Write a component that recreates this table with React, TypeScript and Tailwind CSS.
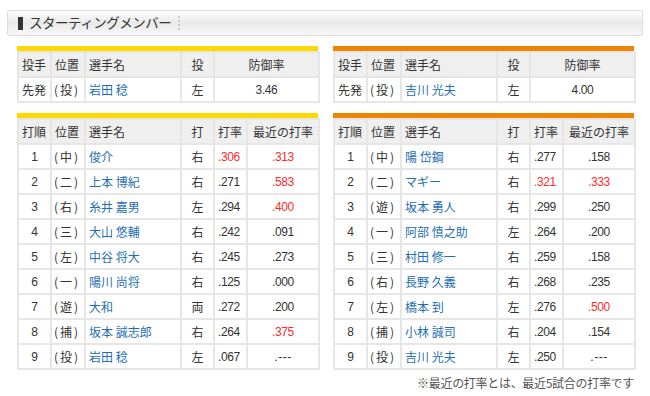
import React from 'react'

type Batter = {
  order: string
  pos: string
  name: string
  hand: string
  avg: string
  recent: string
  avgRed?: boolean
  recentRed?: boolean
}

const pitchers = {
  left: { role: '先発', pos: '投', name: '岩田 稔', hand: '左', era: '3.46' },
  right: { role: '先発', pos: '投', name: '吉川 光夫', hand: '左', era: '4.00' },
}

const tigers: Batter[] = [
  { order: '1', pos: '中', name: '俊介', hand: '右', avg: '.306', recent: '.313', avgRed: true, recentRed: true },
  { order: '2', pos: '二', name: '上本 博紀', hand: '右', avg: '.271', recent: '.583', recentRed: true },
  { order: '3', pos: '右', name: '糸井 嘉男', hand: '左', avg: '.294', recent: '.400', recentRed: true },
  { order: '4', pos: '三', name: '大山 悠輔', hand: '右', avg: '.242', recent: '.091' },
  { order: '5', pos: '左', name: '中谷 将大', hand: '右', avg: '.245', recent: '.273' },
  { order: '6', pos: '一', name: '陽川 尚将', hand: '右', avg: '.125', recent: '.000' },
  { order: '7', pos: '遊', name: '大和', hand: '両', avg: '.272', recent: '.200' },
  { order: '8', pos: '捕', name: '坂本 誠志郎', hand: '右', avg: '.264', recent: '.375', recentRed: true },
  { order: '9', pos: '投', name: '岩田 稔', hand: '左', avg: '.067', recent: '.---' },
]

const fighters: Batter[] = [
  { order: '1', pos: '中', name: '陽 岱鋼', hand: '右', avg: '.277', recent: '.158' },
  { order: '2', pos: '二', name: 'マギー', hand: '右', avg: '.321', recent: '.333', avgRed: true, recentRed: true },
  { order: '3', pos: '遊', name: '坂本 勇人', hand: '右', avg: '.299', recent: '.250' },
  { order: '4', pos: '一', name: '阿部 慎之助', hand: '左', avg: '.264', recent: '.200' },
  { order: '5', pos: '三', name: '村田 修一', hand: '右', avg: '.259', recent: '.158' },
  { order: '6', pos: '右', name: '長野 久義', hand: '右', avg: '.268', recent: '.235' },
  { order: '7', pos: '左', name: '橋本 到', hand: '左', avg: '.276', recent: '.500', recentRed: true },
  { order: '8', pos: '捕', name: '小林 誠司', hand: '右', avg: '.204', recent: '.154' },
  { order: '9', pos: '投', name: '吉川 光夫', hand: '左', avg: '.250', recent: '.---' },
]

const cell = 'h-[25px] p-0 px-[3px] border-2 border-[#e6e6e6] text-[12px] leading-[16px] whitespace-nowrap overflow-hidden'
const th = `${cell} bg-[#efefef] font-normal text-[#333]`
const td = `${cell} bg-white`
const dark = 'text-[#333]'
const blue = 'text-[#1f6fb2]'
const red = 'text-[#ff2a2a]'
const num = "font-['Liberation_Sans','Noto_Sans_CJK_JP',sans-serif] text-[11.5px] tracking-[-0.4px]"

// position like （中） squeezed into the narrow column
const Pos = ({ p }: { p: string }) => (
  <span className="inline-flex items-center">
    <span>(</span>
    <span className="mx-[2px]">{p}</span>
    <span>)</span>
  </span>
)

const Recent = ({ v }: { v: string }) =>
  v === '.---' ? <span className="tracking-[0.5px]">.‐‐‐</span> : <>{v}</>

const Cols = ({ last }: { last: number[] }) => (
  <colgroup>
    <col className="w-[33px]" />
    <col className="w-[34px]" />
    <col className="w-[96px]" />
    <col className="w-[33px]" />
    {last.map((w, i) => (
      <col key={i} style={{ width: w }} />
    ))}
  </colgroup>
)

const PitcherTable = ({ p, bar }: { p: typeof pitchers.left; bar: string }) => (
  <div className="w-[301px]">
    <div className={`h-[5px] ${bar}`} />
    <table className="w-full table-fixed border-collapse">
      <Cols last={[105]} />
      <thead>
        <tr>
          <th className={`${th} text-left`}>投手</th>
          <th className={`${th} text-left`}>位置</th>
          <th className={`${th} text-left`}>選手名</th>
          <th className={`${th} text-center`}>投</th>
          <th className={`${th} text-center`}>防御率</th>
        </tr>
      </thead>
      <tbody>
        <tr>
          <td className={`${td} ${dark}`}>{p.role}</td>
          <td className={`${td} ${dark} pl-[2px] pr-0`}><Pos p={p.pos} /></td>
          <td className={`${td} ${blue}`}>{p.name}</td>
          <td className={`${td} ${dark} text-center`}>{p.hand}</td>
          <td className={`${td} ${dark} text-center ${num}`}>{p.era}</td>
        </tr>
      </tbody>
    </table>
  </div>
)

const BatterTable = ({ rows, bar }: { rows: Batter[]; bar: string }) => (
  <div className="w-[301px]">
    <div className={`h-[5px] ${bar}`} />
    <table className="w-full table-fixed border-collapse">
      <Cols last={[33, 72]} />
      <thead>
        <tr>
          <th className={`${th} text-left`}>打順</th>
          <th className={`${th} text-left`}>位置</th>
          <th className={`${th} text-left`}>選手名</th>
          <th className={`${th} text-center`}>打</th>
          <th className={`${th} text-left`}>打率</th>
          <th className={`${th} text-center`}>最近の打率</th>
        </tr>
      </thead>
      <tbody>
        {rows.map((r) => (
          <tr key={r.order}>
            <td className={`${td} ${dark} text-center ${num}`}>{r.order}</td>
            <td className={`${td} ${dark} pl-[2px] pr-0`}><Pos p={r.pos} /></td>
            <td className={`${td} ${blue}`}>{r.name}</td>
            <td className={`${td} ${dark} text-center`}>{r.hand}</td>
            <td className={`${td} ${num} ${r.avgRed ? red : dark}`}>{r.avg}</td>
            <td className={`${td} text-center ${num} ${r.recentRed ? red : dark}`}><Recent v={r.recent} /></td>
          </tr>
        ))}
      </tbody>
    </table>
  </div>
)

export default function App() {
  return (
    <div className="w-[650px] h-[396px] overflow-hidden bg-white font-['Noto_Sans_CJK_JP',sans-serif] text-[#333] pt-[10px]">
      {/* title bar */}
      <div className="mx-[7px] h-[26px] rounded-[2px] border border-[#dedede] bg-gradient-to-b from-[#fdfdfd] via-[#e9e9e9] to-[#f7f7f7] flex items-center pl-[10px]">
        <span className="w-[5px] h-[13px] bg-[#333]" />
        <span className="ml-[6px] text-[13.5px] leading-none tracking-[-0.5px] text-[#333]">スターティングメンバー</span>
        <span className="ml-[7px] h-[14px] border-l-2 border-dotted border-[#ccc]" />
      </div>

      <div className="flex gap-[15px] pl-[17px] mt-[10px]">
        <PitcherTable p={pitchers.left} bar="bg-[#ffd800]" />
        <PitcherTable p={pitchers.right} bar="bg-[#f08300]" />
      </div>

      <div className="flex gap-[15px] pl-[17px] mt-[10px]">
        <BatterTable rows={tigers} bar="bg-[#ffd800]" />
        <BatterTable rows={fighters} bar="bg-[#f08300]" />
      </div>

      <div className="w-[634px] text-right text-[12px] leading-[16px] text-[#555] mt-[5px] tracking-[-0.3px]">
        ※最近の打率とは、最近5試合の打率です
      </div>
    </div>
  )
}
